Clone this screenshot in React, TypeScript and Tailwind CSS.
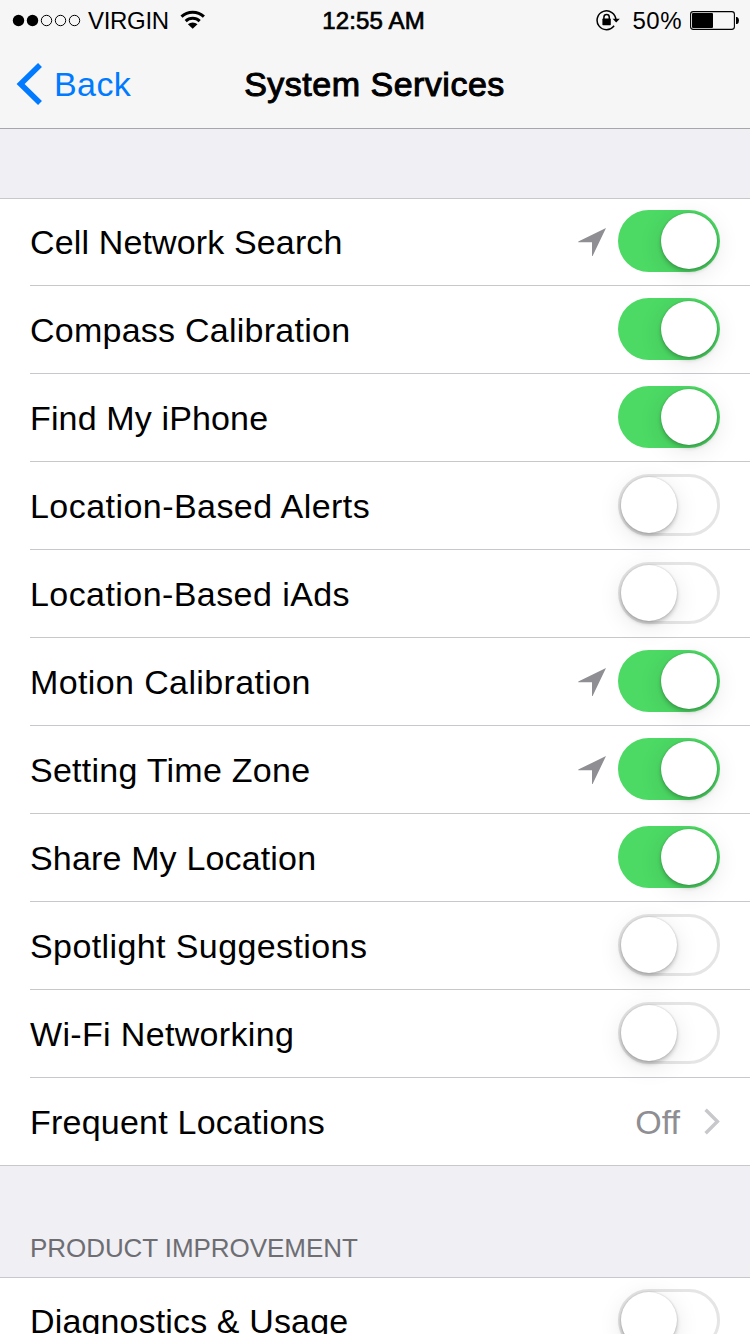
type Service = {
  label: string;
  on: boolean;
  tracking: string;
  arrow?: boolean;
};

const services: Service[] = [
  { label: "Cell Network Search", on: true, arrow: true, tracking: "tracking-[0.14px]" },
  { label: "Compass Calibration", on: true, tracking: "tracking-[0.25px]" },
  { label: "Find My iPhone", on: true, tracking: "tracking-[0.14px]" },
  { label: "Location-Based Alerts", on: false, tracking: "tracking-[0.45px]" },
  { label: "Location-Based iAds", on: false, tracking: "tracking-[0.43px]" },
  { label: "Motion Calibration", on: true, arrow: true, tracking: "tracking-[0.38px]" },
  { label: "Setting Time Zone", on: true, arrow: true, tracking: "tracking-[0.26px]" },
  { label: "Share My Location", on: true, tracking: "tracking-[0.16px]" },
  { label: "Spotlight Suggestions", on: false, tracking: "tracking-[0.4px]" },
  { label: "Wi-Fi Networking", on: false, tracking: "tracking-[0.34px]" },
];

function Toggle({ on }: { on: boolean }) {
  return (
    <button
      role="switch"
      aria-checked={on}
      className={
        on
          ? "flex h-[62px] w-[102px] shrink-0 justify-end rounded-full bg-[#4cd964] p-[3px]"
          : "flex h-[62px] w-[102px] shrink-0 justify-start rounded-full border-[3px] border-[#e5e5e5] bg-white"
      }
    >
      <span className="size-14 rounded-full bg-white shadow-[0_5px_24px_rgba(0,0,0,0.1),0_3px_4px_rgba(0,0,0,0.2),0_0_2px_rgba(0,0,0,0.2)]" />
    </button>
  );
}

function LocationArrow() {
  return (
    <svg width="28" height="28" viewBox="0 0 28 28" className="mt-[18px] mr-3 shrink-0" fill="#8e8e93">
      <path d="M28 0 L14.6 28 H14 V14.2 H0.3 V13.6 Z" />
    </svg>
  );
}

function Row({ label, on, arrow, tracking }: Service) {
  return (
    <li className="ml-[30px] flex h-[88px] items-start border-b border-[#c8c7cc] pr-[30px]">
      <span className={`grow text-[34px] leading-[88px] whitespace-nowrap ${tracking}`}>{label}</span>
      <span className="flex pt-3">
        {arrow && <LocationArrow />}
        <Toggle on={on} />
      </span>
    </li>
  );
}

function StatusBar() {
  return (
    <div className="grid h-10 grid-cols-3 text-[24px] leading-[42px]">
      <div className="flex pl-3">
        <svg width="70" height="40" viewBox="0 0 70 40" className="shrink-0">
          <circle cx="6.5" cy="20.5" r="5.7" />
          <circle cx="20.5" cy="20.5" r="5.7" />
          <g fill="none" stroke="#000" strokeWidth="1">
            <circle cx="34.5" cy="20.5" r="5.2" />
            <circle cx="48.5" cy="20.5" r="5.2" />
            <circle cx="62.5" cy="20.5" r="5.2" />
          </g>
        </svg>
        <span className="ml-1.5 w-[92px] tracking-[-0.3px]">VIRGIN</span>
        <svg width="26" height="40" viewBox="0 0 26 40" className="shrink-0">
          <g fill="none" stroke="#000" strokeWidth="3">
            <path d="M1.5 16.7 A16.2 16.2 0 0 1 23.9 16.7" />
            <path d="M5.7 21.1 A10.3 10.3 0 0 1 19.7 21.1" />
          </g>
          <path d="M12.7 28.8 L7.9 24.3 A7 7 0 0 1 17.5 24.3 Z" />
        </svg>
      </div>
      <div className="pr-[3px] text-center tracking-[0.15px] [-webkit-text-stroke:0.7px_black]">12:55 AM</div>
      <div className="flex justify-end pr-[11px]">
        <svg width="25" height="40" viewBox="0 0 25 40" className="mr-[11px] shrink-0">
          <path d="M18.1 25.8 A9.4 9.4 0 1 1 19.9 20" fill="none" stroke="#000" strokeWidth="1.5" />
          <path d="M16.6 18.7 H23.8 L20.2 22.4 Z" />
          <rect x="6.4" y="18.6" width="8.4" height="6.6" rx="0.6" />
          <path d="M7.9 19 V17.3 A2.7 2.7 0 0 1 13.3 17.3 V19" fill="none" stroke="#000" strokeWidth="1.5" />
        </svg>
        <span className="mr-2 tracking-[0.5px]">50%</span>
        <svg width="49" height="40" viewBox="0 0 49 40" className="shrink-0">
          <rect x="0.6" y="11.6" width="43.8" height="17.8" rx="2.6" fill="none" stroke="#000" strokeWidth="1.1" />
          <rect x="2" y="13" width="21" height="15" rx="1" />
          <path d="M46 17 H47.2 Q49 18 49 20.5 T47.2 24 H46 Z" />
        </svg>
      </div>
    </div>
  );
}

export default function App() {
  return (
    <div className="flex h-[1334px] w-[750px] flex-col overflow-hidden bg-[#efeff4] font-['Liberation_Sans',Arial,sans-serif] text-black">
      <header className="h-[129px] shrink-0 border-b border-[#a7a7aa] bg-[#f6f6f6]">
        <StatusBar />
        <nav className="grid h-[88px] grid-cols-[1fr_auto_1fr] text-[34px] leading-[88px]">
          <a className="flex items-start pl-4 text-[#007aff]">
            <svg width="26" height="88" viewBox="0 0 26 88" fill="none" stroke="#007aff" strokeWidth="5.6">
              <path d="M24 25 L4.6 44 L24 63" />
            </svg>
            <span className="ml-3 tracking-[0.4px]">Back</span>
          </a>
          <h1 className="pr-px tracking-[0.5px] [-webkit-text-stroke:1px_black]">System Services</h1>
        </nav>
      </header>

      <ul className="mt-[69px] shrink-0 border-t border-[#c8c7cc] bg-white [&>li:first-child]:-mt-px">
        {services.map((s) => (
          <Row key={s.label} {...s} />
        ))}
        <li className="flex h-[88px] items-start border-b border-[#c8c7cc] pr-[30px] pl-[30px] text-[34px] leading-[88px]">
          <span className="grow tracking-[0.22px]">Frequent Locations</span>
          <span className="mr-6 text-[#8e8e93]">Off</span>
          <svg width="16" height="88" viewBox="0 0 16 88" fill="none" stroke="#c7c7cc" strokeWidth="3.4">
            <path d="M1.6 31.8 L13.4 43.5 L1.6 55.2" />
          </svg>
        </li>
      </ul>

      <h2 className="h-[111px] shrink-0 pt-[67px] pl-[30px] text-[26px] leading-[30px] tracking-[-0.06px] text-[#6d6d72]">
        PRODUCT IMPROVEMENT
      </h2>
      <ul className="shrink-0 border-t border-[#c8c7cc] bg-white [&>li:first-child]:-mt-px">
        <Row label="Diagnostics & Usage" on={false} tracking="tracking-[0.14px]" />
      </ul>
    </div>
  );
}
